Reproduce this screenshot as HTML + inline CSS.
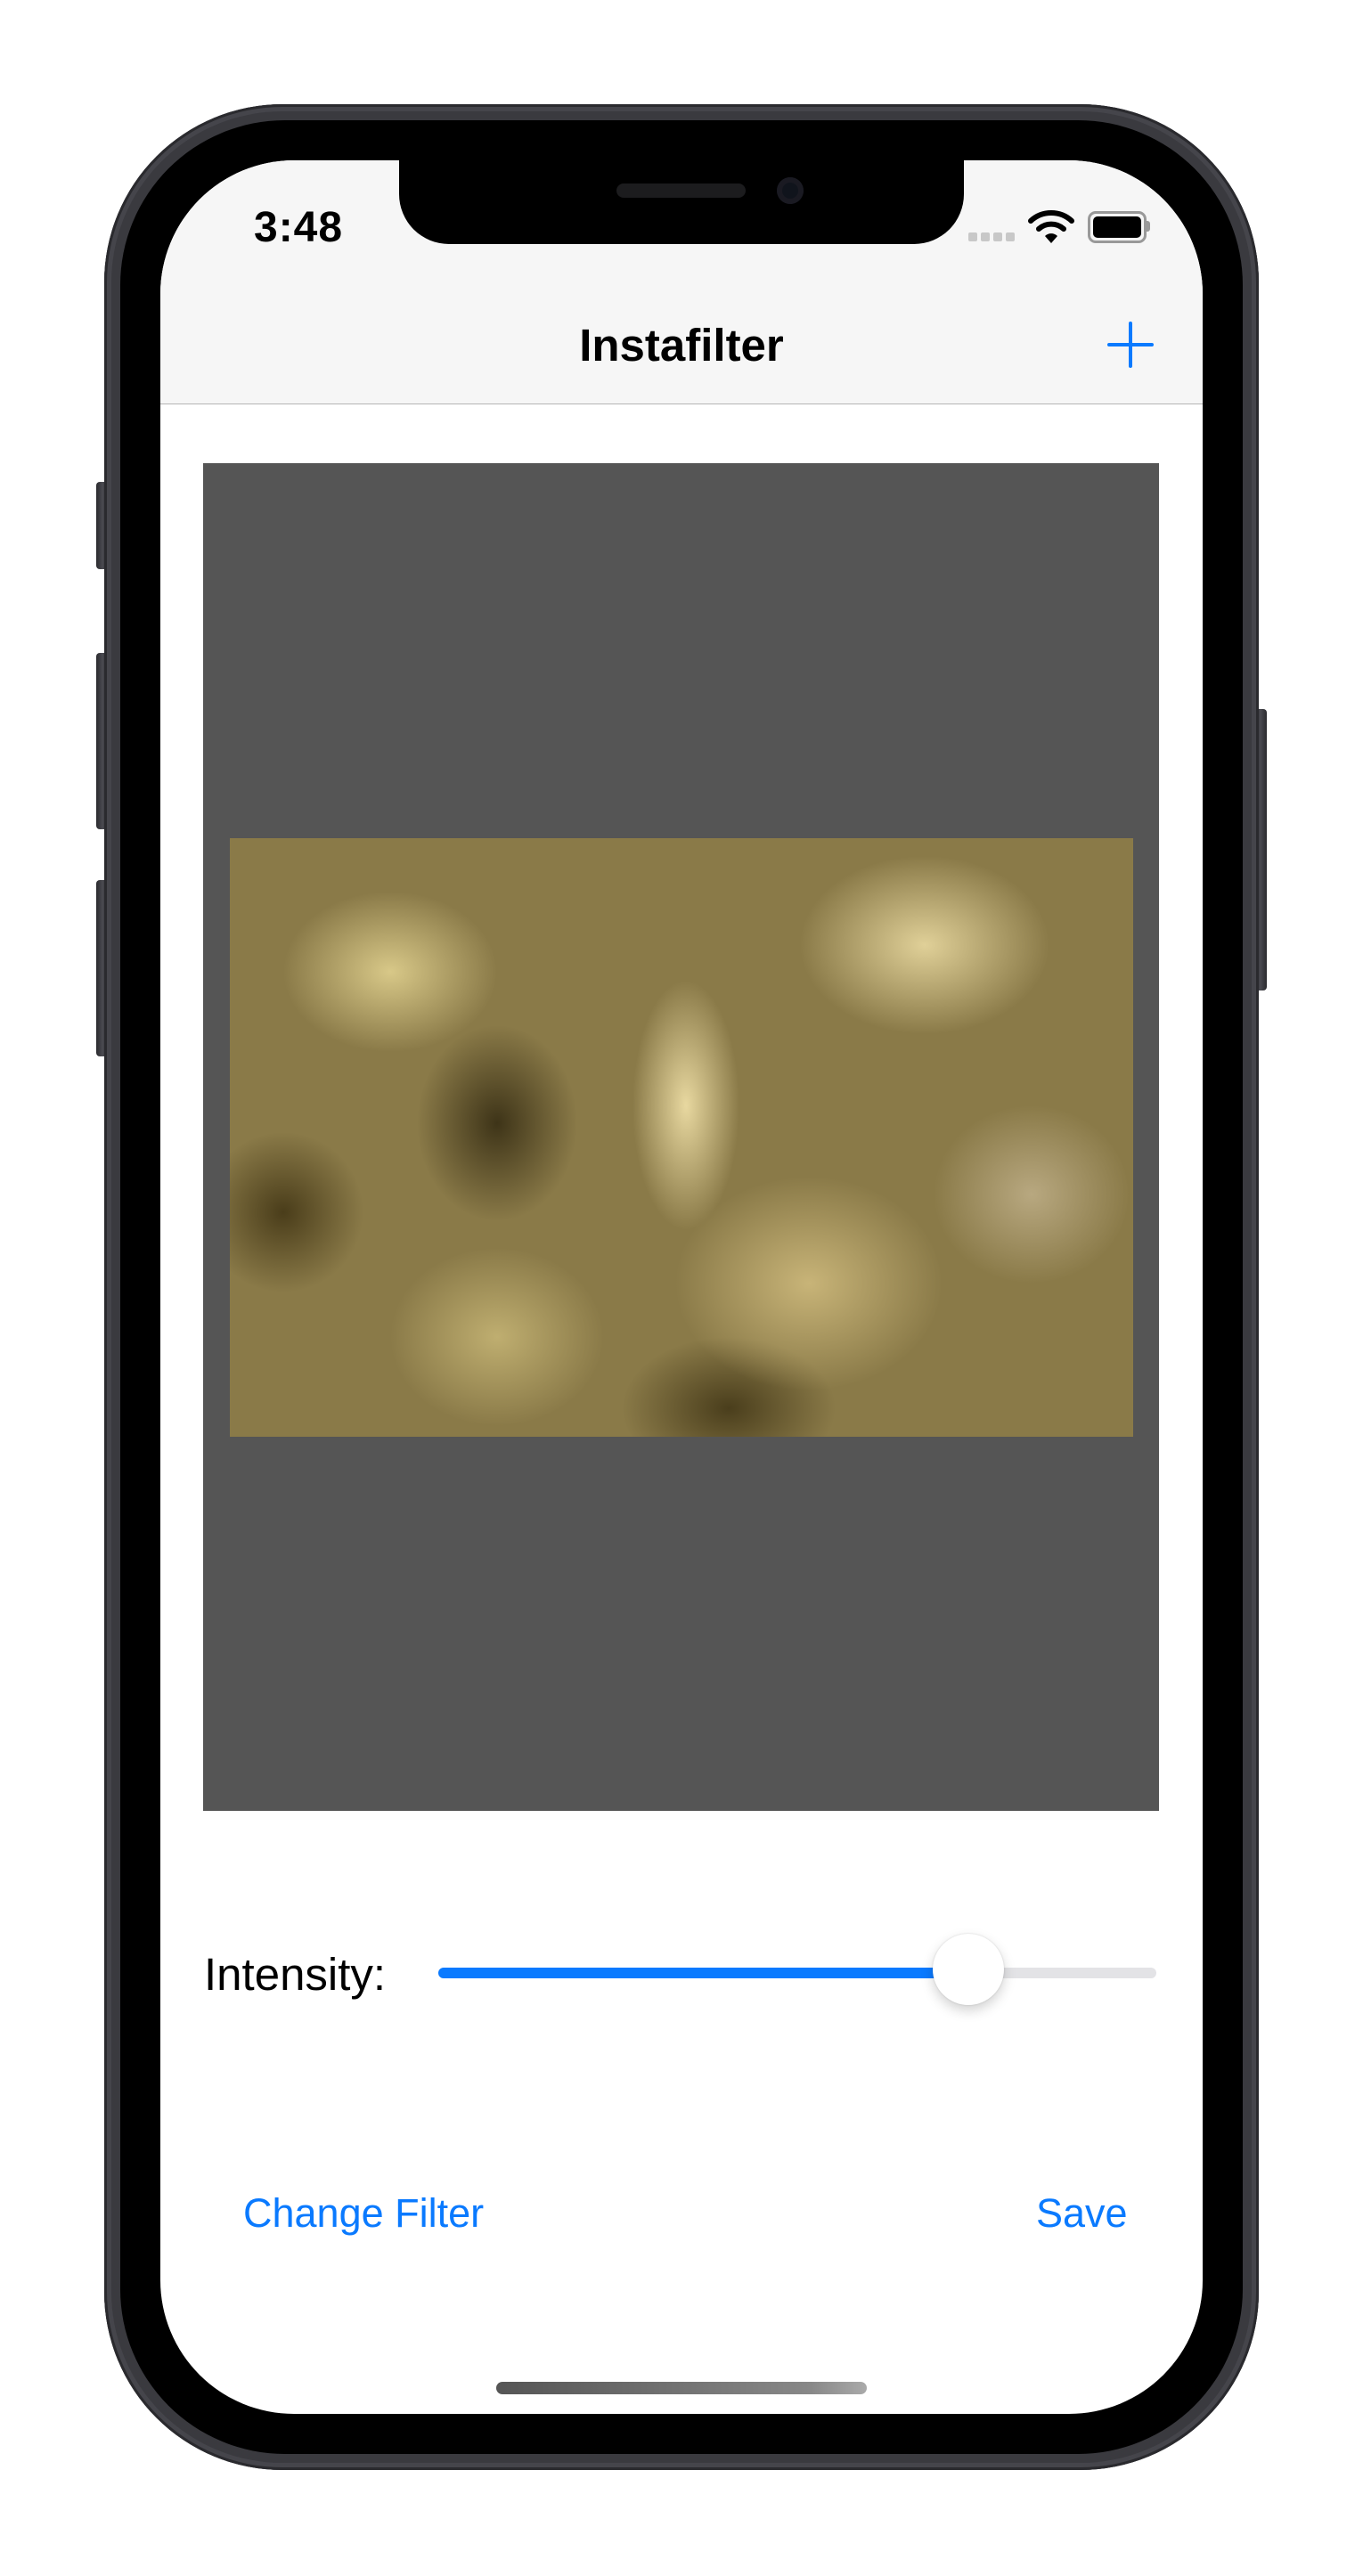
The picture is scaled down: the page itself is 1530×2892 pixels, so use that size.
<!DOCTYPE html>
<html><head><meta charset="utf-8"><style>
html,body{margin:0;padding:0;background:#fff;}
body{width:1530px;height:2892px;position:relative;overflow:hidden;font-family:"Liberation Sans",sans-serif;}
.abs{position:absolute;}
.btn{position:absolute;background:linear-gradient(90deg,#2a2a2e,#4a4a50 50%,#2a2a2e);border-radius:4px;}
</style></head><body>
<div class="btn" style="left:108px;top:541px;width:14px;height:98px"></div>
<div class="btn" style="left:108px;top:733px;width:14px;height:198px"></div>
<div class="btn" style="left:108px;top:988px;width:14px;height:198px"></div>
<div class="btn" style="left:1408px;top:796px;width:14px;height:316px"></div>
<div class="abs" style="left:117px;top:117px;width:1296px;height:2656px;border-radius:200px;background:#3a3a3f;box-shadow:inset 0 0 0 3px #2a2a2e, inset 0 0 0 8px #45454b;"></div>
<div class="abs" style="left:135px;top:135px;width:1260px;height:2620px;border-radius:185px;background:#000;"></div>
<div class="abs" style="left:180px;top:180px;width:1170px;height:2530px;border-radius:150px;background:#fff;overflow:hidden;">
  <div class="abs" style="left:0;top:0;width:1170px;height:273px;background:#f6f6f6;border-bottom:1px solid #b5b5b5;"></div>
  <div class="abs" style="left:268px;top:-2px;width:634px;height:96px;background:#000;border-radius:0 0 56px 56px;"></div>
  <div class="abs" style="left:512px;top:26px;width:145px;height:16px;background:#1c1c1e;border-radius:8px;"></div>
  <div class="abs" style="left:692px;top:19px;width:30px;height:30px;background:#10141c;border-radius:50%;box-shadow:inset 0 0 0 6px #1a1a22;"></div>
  <div class="abs" style="left:105px;top:48px;font-size:48px;font-weight:bold;color:#000;letter-spacing:1px;">3:48</div>
  <div class="abs" style="left:907px;top:81px;width:10px;height:10px;background:#c8c8c8;border-radius:2px;"></div>
  <div class="abs" style="left:921px;top:81px;width:10px;height:10px;background:#c8c8c8;border-radius:2px;"></div>
  <div class="abs" style="left:935px;top:81px;width:10px;height:10px;background:#c8c8c8;border-radius:2px;"></div>
  <div class="abs" style="left:949px;top:81px;width:10px;height:10px;background:#c8c8c8;border-radius:2px;"></div>
  <svg class="abs" style="left:974px;top:56px" width="52" height="40" viewBox="0 0 52 40">
    <path d="M3 12 A34 34 0 0 1 49 12" stroke="#000" stroke-width="6" fill="none" stroke-linecap="round"/>
    <path d="M12 21 A21 21 0 0 1 40 21" stroke="#000" stroke-width="6" fill="none" stroke-linecap="round"/>
    <path d="M19 29 L26 37 L33 29 A10 10 0 0 0 19 29Z" fill="#000"/>
  </svg>
  <div class="abs" style="left:1041px;top:57px;width:60px;height:30px;border:3px solid #999;border-radius:9px;"></div>
  <div class="abs" style="left:1047px;top:63px;width:54px;height:24px;background:#000;border-radius:5px;"></div>
  <div class="abs" style="left:1107px;top:68px;width:4px;height:12px;background:#999;border-radius:0 3px 3px 0;"></div>
  <div class="abs" style="left:0;top:178px;width:1170px;text-align:center;font-size:51px;font-weight:bold;color:#000;">Instafilter</div>
  <div class="abs" style="left:1087px;top:181px;width:4px;height:52px;background:#0a7aff;border-radius:2px;"></div>
  <div class="abs" style="left:1063px;top:205px;width:52px;height:4px;background:#0a7aff;border-radius:2px;"></div>

  <div class="abs" style="left:48px;top:340px;width:1073px;height:1513px;background:#555;"></div>
  <div class="abs" style="left:78px;top:761px;width:1014px;height:672px;overflow:hidden;background:
    radial-gradient(ellipse 60px 140px at 512px 300px,#e8d8a0,transparent),
    radial-gradient(ellipse 120px 90px at 180px 150px,#d8c888,transparent),
    radial-gradient(ellipse 140px 100px at 780px 120px,#e0d098,transparent),
    radial-gradient(ellipse 150px 120px at 650px 500px,#c8b478,transparent),
    radial-gradient(ellipse 120px 100px at 300px 560px,#bfae70,transparent),
    radial-gradient(ellipse 110px 100px at 900px 400px,#b8a880,transparent),
    radial-gradient(ellipse 90px 110px at 300px 320px,#3e3418,transparent),
    radial-gradient(ellipse 120px 80px at 560px 640px,#4a3e1c,transparent),
    radial-gradient(ellipse 90px 90px at 60px 420px,#4a3d1a,transparent),
    #8a7a48;"></div>

  <div class="abs" style="left:49px;top:2007px;font-size:51px;color:#000;">Intensity:</div>
  <div class="abs" style="left:312px;top:2029px;width:806px;height:12px;background:#e3e3e6;border-radius:6px;"></div>
  <div class="abs" style="left:312px;top:2029px;width:600px;height:12px;background:#0a7aff;border-radius:6px;"></div>
  <div class="abs" style="left:867px;top:1991px;width:80px;height:80px;background:#fff;border-radius:50%;box-shadow:0 6px 14px rgba(0,0,0,0.18),0 0 2px rgba(0,0,0,0.15);"></div>

  <div class="abs" style="left:93px;top:2279px;font-size:45px;color:#0a7aff;">Change Filter</div>
  <div class="abs" style="left:983px;top:2279px;font-size:45px;color:#0a7aff;">Save</div>
  <div class="abs" style="left:377px;top:2494px;width:416px;height:14px;background:linear-gradient(90deg,#555,#888 85%,#aaa);border-radius:7px;"></div>
</div>
</body></html>
